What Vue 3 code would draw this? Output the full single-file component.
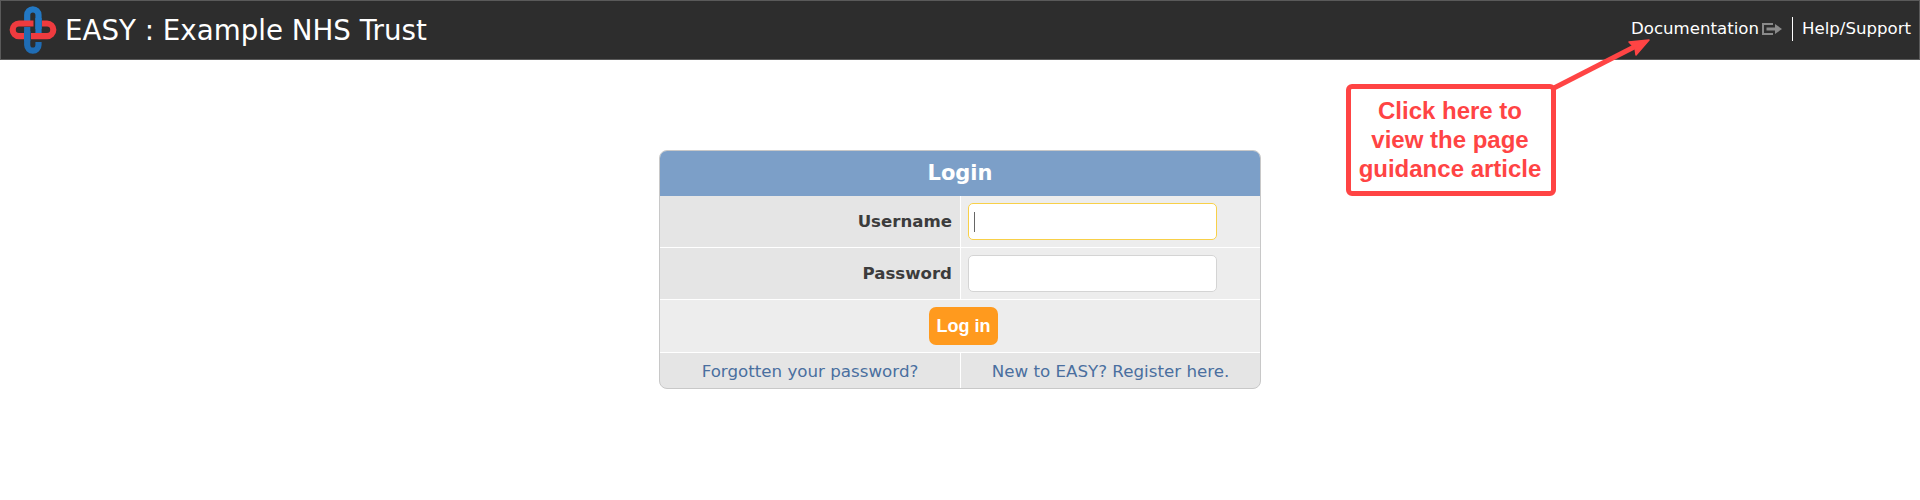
<script setup>
import { ref } from "vue";

const username = ref("");
const password = ref("");
</script>

<template>
  <div class="page">
    <header class="topbar">
      <div class="brand">
        <svg class="logo" viewBox="9 6 48 48" width="48" height="48" aria-hidden="true">
          <g fill="none" stroke-width="6.2">
            <path d="M27.2 22 V15 a5.65 5.65 0 0 1 11.3 0 V34" stroke="#2278c4" />
            <path d="M27.2 27 V45 a5.65 5.65 0 0 0 11.3 0 V42" stroke="#1f6cb4" />
            <path d="M33.5 23.5 H19 a6.3 6.3 0 0 0 0 12.6 H24" stroke="#ee3b3f" />
            <path d="M42 23.5 H47 a6.3 6.3 0 0 1 0 12.6 H31" stroke="#ee3b3f" />
            <path d="M38.5 18 V29" stroke="#2278c4" />
            <path d="M27.2 31 V41" stroke="#1f6cb4" />
          </g>
        </svg>
        <span class="title">EASY : Example NHS Trust</span>
      </div>
      <nav class="links">
        <a class="link">Documentation</a>
        <svg class="doc-icon" viewBox="0 0 20 12" width="20" height="12" aria-hidden="true">
          <path d="M11 1 H1 V11 H11" fill="none" stroke="#8a8a8a" stroke-width="2" />
          <path d="M4.5 4.5 H13 V1 L20 6 L13 11 V7.5 H4.5 Z" fill="#8a8a8a" />
        </svg>
        <span class="divider"></span>
        <a class="link">Help/Support</a>
      </nav>
    </header>

    <main class="content">
      <form class="card" @submit.prevent>
        <div class="card-head">Login</div>
        <div class="row">
          <label class="cell label" for="username">Username</label>
          <div class="cell field">
            <input id="username" v-model="username" class="input is-focus" type="text" />
            <span class="caret"></span>
          </div>
        </div>
        <div class="row">
          <label class="cell label" for="password">Password</label>
          <div class="cell field"><input id="password" v-model="password" class="input" type="password" /></div>
        </div>
        <div class="actions"><button class="btn" type="submit">Log in</button></div>
        <div class="row foot">
          <a class="cell foot-link">Forgotten your password?</a>
          <a class="cell foot-link">New to EASY? Register here.</a>
        </div>
      </form>
    </main>

    <!-- annotation drawn over the screenshot -->
    <svg class="arrow" viewBox="0 0 100 60" width="100" height="60" aria-hidden="true">
      <path d="M2 58 L86 15" fill="none" stroke="#ff4444" stroke-width="5" />
      <path d="M97 10 L77 12 L83 18 L84 25 Z" fill="#ff4444" stroke="#ff4444" stroke-width="1.5" stroke-linejoin="round" />
    </svg>
    <div class="callout">Click here to<br />view the page<br />guidance article</div>
  </div>
</template>

<style>
html,
body {
  margin: 0;
  background: #fff;
}
</style>

<style scoped>
.page {
  position: relative;
  height: 500px;
  overflow: hidden;
  font-family: "DejaVu Sans", Verdana, sans-serif;
}

.topbar {
  box-sizing: border-box;
  height: 60px;
  display: flex;
  align-items: center;
  justify-content: space-between;
  padding: 0 8px 0 8px;
  background: #2d2d2d;
  border: 1px solid #5a5a5a;
}

.brand {
  display: flex;
  align-items: center;
  gap: 8px;
}

.logo {
  display: block;
}

.title {
  font-size: 27.7px;
  color: #fff;
  white-space: nowrap;
}

.links {
  display: flex;
  align-items: center;
  padding-bottom: 3px;
  font-size: 16.6px;
  color: #fff;
}

.doc-icon {
  margin-left: 3px;
}

.divider {
  width: 1px;
  height: 24px;
  margin: 0 9px 0 10px;
  background: #fff;
}

.content {
  display: flex;
  justify-content: center;
  padding-top: 90px;
}

.card {
  box-sizing: border-box;
  width: 602px;
  border: 1px solid #c8c8c8;
  border-radius: 8px;
  overflow: hidden;
  background: #e5e5e5;
}

.card-head {
  height: 45px;
  line-height: 45px;
  text-align: center;
  font-size: 21px;
  font-weight: 700;
  color: #fff;
  background: #7c9fc8;
}

.row {
  display: grid;
  grid-template-columns: 300px 1fr;
  height: 51px;
  border-bottom: 1px solid #fff;
}

.cell {
  display: flex;
  align-items: center;
}

.label {
  justify-content: flex-end;
  padding-right: 8px;
  font-size: 16.6px;
  font-weight: 700;
  color: #3c3c3c;
  background: #e5e5e5;
}

.field {
  position: relative;
  padding-left: 7px;
  background: #ededed;
  border-left: 1px solid #fff;
}

.input {
  box-sizing: border-box;
  width: 249px;
  height: 37px;
  padding: 0 5px;
  border: 1px solid #d4d4d4;
  border-radius: 5px;
  background: #fff;
  outline: none;
}

.input.is-focus {
  border-color: #f8d048;
}

.caret {
  position: absolute;
  left: 13px;
  top: 16px;
  width: 1px;
  height: 20px;
  background: #666;
}

.actions {
  display: flex;
  align-items: center;
  justify-content: center;
  height: 52px;
  padding-left: 7px;
  background: #ededed;
  border-bottom: 1px solid #fff;
}

.btn {
  width: 69px;
  height: 38px;
  padding: 0;
  border: none;
  border-radius: 7px;
  font-family: "Liberation Sans", Arial, sans-serif;
  font-size: 18px;
  font-weight: 700;
  color: #fff;
  background: #ff9a1e;
}

.foot {
  height: 35px;
  border-bottom: none;
}

.foot-link {
  justify-content: center;
  font-size: 16.7px;
  color: #4a6f9f;
}

.foot-link + .foot-link {
  border-left: 1px solid #fff;
}

.arrow {
  position: absolute;
  left: 1552px;
  top: 30px;
}

.callout {
  position: absolute;
  left: 1346px;
  top: 84px;
  box-sizing: border-box;
  width: 210px;
  height: 112px;
  padding: 7px 2px 0 0;
  border: 5px solid #ff4444;
  border-radius: 6px;
  background: #fff;
  text-align: center;
  font-family: "Liberation Sans", Arial, sans-serif;
  font-size: 24px;
  line-height: 29px;
  font-weight: 700;
  color: #ff4444;
}
</style>
